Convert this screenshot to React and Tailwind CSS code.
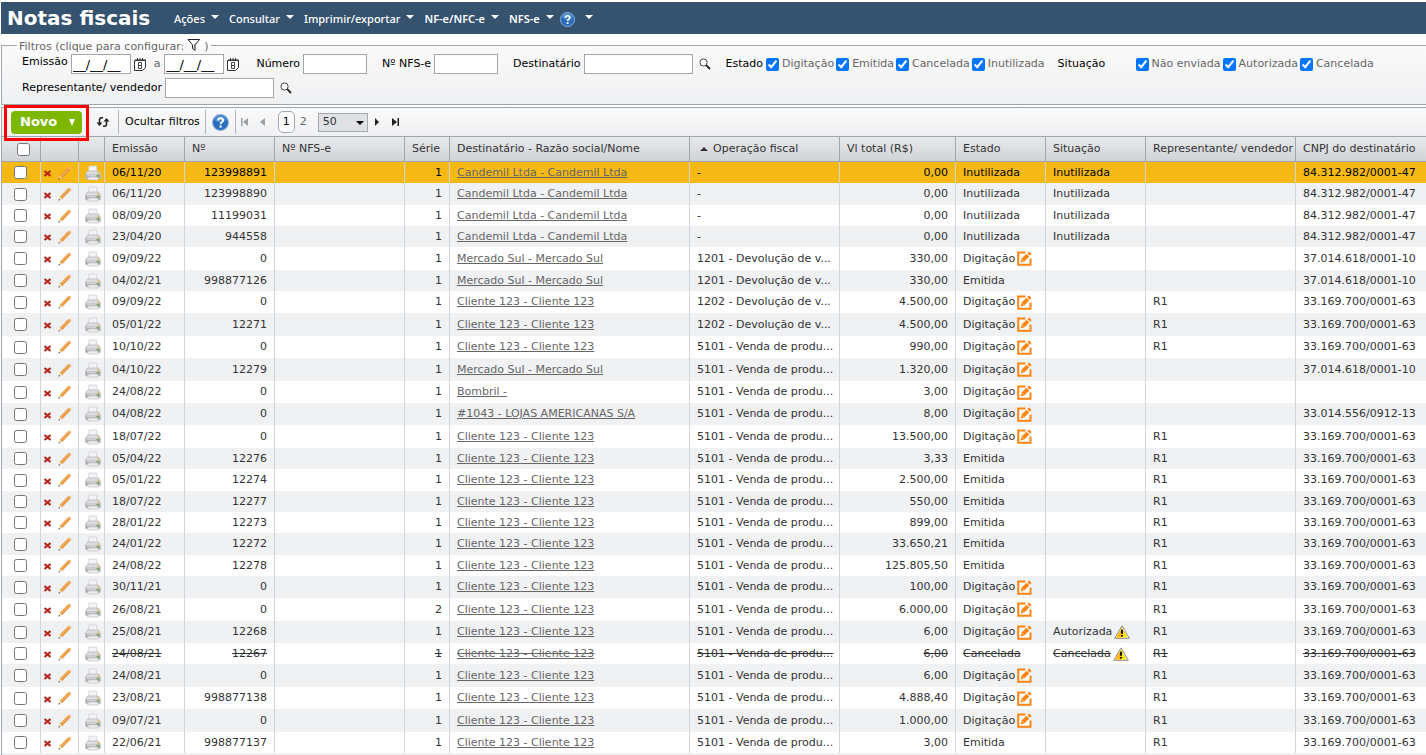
import React, { useState } from 'react';

const filtersEstado = ['Digitação', 'Emitida', 'Cancelada', 'Inutilizada'];
const filtersSituacao = ['Não enviada', 'Autorizada', 'Cancelada'];

const CNPJ_CANDEMIL = '84.312.982/0001-47';
const CNPJ_MERCADO = '37.014.618/0001-10';
const CNPJ_CLIENTE = '33.169.700/0001-63';
const CANDEMIL = 'Candemil Ltda - Candemil Ltda';
const MERCADO = 'Mercado Sul - Mercado Sul';
const CLIENTE = 'Cliente 123 - Cliente 123';
const DEV1 = '1201 - Devolução de v...';
const DEV2 = '1202 - Devolução de v...';
const VENDA = '5101 - Venda de produ...';

// altura, emissão, nº, série, destinatário, operação, total, estado, situação, representante, cnpj
const notas = [
    ['h-[21px]', '06/11/20', '123998891', 1, CANDEMIL, '-', '0,00', 'Inutilizada', 'Inutilizada', '', CNPJ_CANDEMIL],
    ['h-[22px]', '06/11/20', '123998890', 1, CANDEMIL, '-', '0,00', 'Inutilizada', 'Inutilizada', '', CNPJ_CANDEMIL],
    ['h-[21px]', '08/09/20', '11199031', 1, CANDEMIL, '-', '0,00', 'Inutilizada', 'Inutilizada', '', CNPJ_CANDEMIL],
    ['h-[21px]', '23/04/20', '944558', 1, CANDEMIL, '-', '0,00', 'Inutilizada', 'Inutilizada', '', CNPJ_CANDEMIL],
    ['h-[23px]', '09/09/22', '0', 1, MERCADO, DEV1, '330,00', 'Digitação', '', '', CNPJ_MERCADO],
    ['h-[21px]', '04/02/21', '998877126', 1, MERCADO, DEV1, '330,00', 'Emitida', '', '', CNPJ_MERCADO],
    ['h-[22px]', '09/09/22', '0', 1, CLIENTE, DEV2, '4.500,00', 'Digitação', '', 'R1', CNPJ_CLIENTE],
    ['h-[23px]', '05/01/22', '12271', 1, CLIENTE, DEV2, '4.500,00', 'Digitação', '', 'R1', CNPJ_CLIENTE],
    ['h-[22px]', '10/10/22', '0', 1, CLIENTE, VENDA, '990,00', 'Digitação', '', 'R1', CNPJ_CLIENTE],
    ['h-[23px]', '04/10/22', '12279', 1, MERCADO, VENDA, '1.320,00', 'Digitação', '', '', CNPJ_MERCADO],
    ['h-[22px]', '24/08/22', '0', 1, 'Bombril -', VENDA, '3,00', 'Digitação', '', '', ''],
    ['h-[22px]', '04/08/22', '0', 1, '#1043 - LOJAS AMERICANAS S/A', VENDA, '8,00', 'Digitação', '', '', '33.014.556/0912-13'],
    ['h-[23px]', '18/07/22', '0', 1, CLIENTE, VENDA, '13.500,00', 'Digitação', '', 'R1', CNPJ_CLIENTE],
    ['h-[21px]', '05/04/22', '12276', 1, CLIENTE, VENDA, '3,33', 'Emitida', '', 'R1', CNPJ_CLIENTE],
    ['h-[22px]', '05/01/22', '12274', 1, CLIENTE, VENDA, '2.500,00', 'Emitida', '', 'R1', CNPJ_CLIENTE],
    ['h-[21px]', '18/07/22', '12277', 1, CLIENTE, VENDA, '550,00', 'Emitida', '', 'R1', CNPJ_CLIENTE],
    ['h-[21px]', '28/01/22', '12273', 1, CLIENTE, VENDA, '899,00', 'Emitida', '', 'R1', CNPJ_CLIENTE],
    ['h-[22px]', '24/01/22', '12272', 1, CLIENTE, VENDA, '33.650,21', 'Emitida', '', 'R1', CNPJ_CLIENTE],
    ['h-[21px]', '24/08/22', '12278', 1, CLIENTE, VENDA, '125.805,50', 'Emitida', '', 'R1', CNPJ_CLIENTE],
    ['h-[22px]', '30/11/21', '0', 1, CLIENTE, VENDA, '100,00', 'Digitação', '', 'R1', CNPJ_CLIENTE],
    ['h-[23px]', '26/08/21', '0', 2, CLIENTE, VENDA, '6.000,00', 'Digitação', '', 'R1', CNPJ_CLIENTE],
    ['h-[22px]', '25/08/21', '12268', 1, CLIENTE, VENDA, '6,00', 'Digitação', 'Autorizada', 'R1', CNPJ_CLIENTE],
    ['h-[21px]', '24/08/21', '12267', 1, CLIENTE, VENDA, '6,00', 'Cancelada', 'Cancelada', 'R1', CNPJ_CLIENTE],
    ['h-[23px]', '24/08/21', '0', 1, CLIENTE, VENDA, '6,00', 'Digitação', '', 'R1', CNPJ_CLIENTE],
    ['h-[22px]', '23/08/21', '998877138', 1, CLIENTE, VENDA, '4.888,40', 'Digitação', '', 'R1', CNPJ_CLIENTE],
    ['h-[23px]', '09/07/21', '0', 1, CLIENTE, VENDA, '1.000,00', 'Digitação', '', 'R1', CNPJ_CLIENTE],
    ['h-[21px]', '22/06/21', '998877137', 1, CLIENTE, VENDA, '3,00', 'Emitida', '', 'R1', CNPJ_CLIENTE],
];

function Caret({ className }) {
    return (
        <svg viewBox="0 0 8 4" className={`h-1 w-2 ${className}`} fill="currentColor">
            <path d="M0 0h8L4 4z" />
        </svg>
    );
}

function HelpIcon({ className }) {
    return (
        <svg viewBox="0 0 16 16" className={className}>
            <circle cx="8" cy="8" r="7.5" fill="#2b6cb8" stroke="#8fb3dc" />
            <ellipse cx="8" cy="4.6" rx="5.4" ry="3.6" fill="#5c9ade" opacity=".7" />
            <path d="M5.7 6.2c0-3 4.7-2.9 4.7 0 0 1.7-2.3 1.6-2.3 3.4" fill="none" stroke="#fff" strokeWidth="1.8" />
            <rect x="7.1" y="10.8" width="2" height="2" fill="#fff" />
        </svg>
    );
}

function SearchIcon() {
    return (
        <svg viewBox="0 0 12 12" className="h-3 w-3" fill="none">
            <circle cx="4.5" cy="4.5" r="3.6" fill="#fff" stroke="#444" />
            <path d="M7.2 7.2l3.8 3.8" stroke="#222" strokeWidth="1.8" />
        </svg>
    );
}

function CalendarIcon() {
    return (
        <svg viewBox="0 0 13 13" className="h-[13px] w-[13px]" fill="none" stroke="#333">
            <path d="M.5 2.5h11v7l-3 3h-8z" fill="#fff" />
            <path d="M1 2h11M3.5 0v2M6 0v2M8.5 0v2" />
            <path d="M4.5 4.5h3v6h-3zM4.5 7.5h3" strokeWidth=".9" />
            <path d="M8.5 12.500l3-3" />
        </svg>
    );
}

function FunnelIcon() {
    return (
        <svg viewBox="0 0 14 14" className="h-[14px] w-[14px]">
            <path d="M1 1.500h11.500L8 7v5.500L5.500 10.500V7z" fill="#fff" stroke="#222" />
            <path d="M6.800 7v4L8 12.500V7l3-4z" fill="#777" />
        </svg>
    );
}

function RefreshIcon() {
    return (
        <svg viewBox="0 0 14 12" className="h-3 w-[14px]" fill="none" stroke="#222" strokeWidth="1.5">
            <path d="M7 1.700H5.500Q3.500 1.700 3.500 4v4M7 10.300h1.500q2 0 2-2.300V4" />
            <path d="M.5 6.500h6l-3 3.500zM7.500 5.500h6L10.500 2z" fill="#222" stroke="none" />
        </svg>
    );
}

function DeleteIcon() {
    return (
        <svg viewBox="0 0 7 7" className="h-[7px] w-[7px]" fill="none" stroke="#b8281f" strokeWidth="2.2">
            <path d="M.5 1l6 5M6.500 1l-6 5" />
        </svg>
    );
}

function PencilIcon() {
    return (
        <svg viewBox="0 0 14 14" className="h-[14px] w-[14px]">
            <path d="M1.800 10L10 1.600q1-.9 2 0t.2 2L4 12z" fill="#ec9a3d" stroke="#d98a3a" strokeWidth=".4" />
            <path d="M2.600 10.600L11 2.200" stroke="#f8c789" strokeWidth=".6" />
            <path d="M1.800 10L4 12l-3.300 1.300z" fill="#f5dcb5" />
            <path d="M1.200 11.900l1 1-1.900.7z" fill="#333" />
            <path d="M10 1.600q1.500-1.600 2.700-.4t-.5 2.400z" fill="#f3b878" />
        </svg>
    );
}

function PrinterIcon() {
    return (
        <svg viewBox="0 0 16 16" className="h-4 w-4">
            <path d="M4 1h7.500l.5 6H3.500z" fill="#f3f3f5" stroke="#cfd0d4" strokeWidth=".8" />
            <path d="M2.500 6h11l2 3v4.500h-15V9z" fill="#dcdddf" stroke="#b5b6ba" strokeWidth=".7" />
            <path d="M1 9.500h14V13H1z" fill="#a9abb0" />
            <path d="M2 9.500h9v2H2z" fill="#cfd0d2" />
            <path d="M3.500 12h9l1 3h-11z" fill="#eee" stroke="#bbb" strokeWidth=".6" />
            <rect x="12.5" y="7.5" width="1.5" height="1.5" fill="#e6b422" />
            <rect x="12.5" y="10" width="1.5" height="1.5" fill="#65b02c" />
        </svg>
    );
}

function EditIcon() {
    return (
        <svg viewBox="0 0 15 15" className="h-[15px] w-[15px]">
            <path d="M1 1h12.500v12.800H1z" fill="#fff" />
            <path d="M8.500 1.500H1.200v12.300h12.300V7.500" fill="none" stroke="#ff8412" strokeWidth="2" />
            <path d="M3.600 11.400l.8-3.600L9.500 2.700l2.800 2.800-5.100 5.100z" fill="#ff8412" />
            <path d="M10.300 2l1-1q.7-.6 1.400 0l1.300 1.300q.6.7 0 1.400l-1 1z" fill="#ff8412" />
            <path d="M5.200 8.500l1.300 1.300" stroke="#fff" strokeWidth=".8" />
        </svg>
    );
}

function WarningIcon() {
    return (
        <svg viewBox="0 0 16 14" className="h-[14px] w-4">
            <path d="M8 .9L15.300 13.300H.7z" fill="#fff" stroke="#85878c" strokeLinejoin="round" />
            <path d="M8 2.500L13.800 12.400H2.200z" fill="#ffe500" />
            <path d="M8 2.500v9.900H2.200z" fill="#ffb800" />
            <path d="M8 4.800v4M8 10v1.600" stroke="#111" strokeWidth="2" />
        </svg>
    );
}

function PageArrow({ label, d, disabled }) {
    return (
        <button type="button" aria-label={label} disabled={disabled} className={disabled ? 'text-[#9b9fa6]' : 'text-[#222]'}>
            <svg viewBox="0 0 8 8" className="h-2 w-2" fill="currentColor">
                <path d={d} />
            </svg>
        </button>
    );
}

function MenuItem({ label, bold }) {
    return (
        <button type="button" className={`flex items-center gap-[6px] ${bold ? 'font-semibold' : 'font-medium'}`}>
            {label}
            <Caret className="mb-1" />
        </button>
    );
}

function TextFilter({ id, label, width, search }) {
    return (
        <div className="flex items-center gap-[3px]">
            <label htmlFor={id} className="whitespace-nowrap">{label}</label>
            <input id={id} type="text" className={`h-5 border border-[#a5a5a5] bg-white px-1 ${width}`} />
            {search && (
                <button type="button" aria-label={`Pesquisar ${label}`} className="ml-[3px]">
                    <SearchIcon />
                </button>
            )}
        </div>
    );
}

function CheckFilter({ label }) {
    return (
        <label className="flex items-center gap-[3px] whitespace-nowrap text-[#666]">
            <input type="checkbox" defaultChecked className="h-[13px] w-[13px] accent-[#0075ff]" />
            {label}
        </label>
    );
}

function DateInput({ id, label }) {
    return (
        <>
            <input
                id={id}
                type="text"
                aria-label={label}
                defaultValue="__/__/__"
                className="h-5 w-[60px] border border-[#a5a5a5] bg-white px-px text-[13px] text-black"
            />
            <button type="button" aria-label="Abrir calendário" className="ml-[3px]">
                <CalendarIcon />
            </button>
        </>
    );
}

function Filters() {
    return (
        <fieldset className="ml-px h-[67px] border border-r-0 border-[#9fa6ae] bg-linear-to-b from-[#fafafa] to-[#eff0f2] text-black">
            <legend className="ml-[15px] flex h-[14px] items-end px-[2px] leading-[11px] text-[#666]">
                Filtros (clique para configurar:
                <button type="button" aria-label="Configurar filtros" className="mx-[3px]">
                    <FunnelIcon />
                </button>
                )
            </legend>
            <div className="mt-[2px] flex h-5 items-center pl-5">
                <label htmlFor="emissao-de" className="mr-[3px] mb-1">Emissão</label>
                <DateInput id="emissao-de" label="Emissão de" />
                <span className="mr-1 ml-[7px] text-[#666]">a</span>
                <DateInput id="emissao-ate" label="Emissão até" />
                <div className="ml-4 flex items-center gap-[15px]">
                    <TextFilter id="numero" label="Número" width="w-16" />
                    <TextFilter id="nfse" label="Nº NFS-e" width="w-16" />
                    <TextFilter id="destinatario" label="Destinatário" width="w-[109px]" search />
                </div>
                <span className="mr-[3px] ml-[15px]">Estado</span>
                <div className="flex gap-[2px]">
                    {filtersEstado.map((f) => <CheckFilter key={f} label={f} />)}
                </div>
                <span className="ml-[13px] w-[78px]">Situação</span>
                <div className="flex gap-[2px]">
                    {filtersSituacao.map((f) => <CheckFilter key={f} label={f} />)}
                </div>
            </div>
            <div className="mt-1 flex h-5 items-center pl-5">
                <TextFilter id="representante" label="Representante/ vendedor" width="w-[109px]" search />
            </div>
        </fieldset>
    );
}

function Toolbar() {
    return (
        <div className="ml-px mt-[2px] flex h-[29px] items-center border-t border-l border-[#9fa6ae] bg-linear-to-b from-[#fafafa] to-[#eff0f2] text-black">
            <div className="relative ml-[9px] flex">
                <div className="pointer-events-none absolute -inset-x-[7px] -top-[6px] -bottom-[7px] z-10 border-3 border-[#fe0000]" />
                <button type="button" className="flex h-[23px] w-[71px] items-center justify-between rounded-sm bg-[#7db700] pr-[6px] pl-[9px] text-[13px] font-bold text-white">
                    Novo
                    <svg viewBox="0 0 8 8" className="h-2 w-2" fill="currentColor">
                        <path d="M1 1h6L4 8z" />
                    </svg>
                </button>
            </div>
            <button type="button" aria-label="Atualizar" className="ml-[14px]">
                <RefreshIcon />
            </button>
            <div className="ml-2 flex h-6 items-center border-x border-[#b0b5bb] pr-[5px] pl-[6px]">
                <button type="button">Ocultar filtros</button>
            </div>
            <div className="flex h-6 items-center border-r border-[#b0b5bb] px-[6px]">
                <button type="button" aria-label="Ajuda">
                    <HelpIcon className="h-[17px] w-[17px]" />
                </button>
            </div>
            <div className="ml-[5px] flex items-center gap-[10px]">
                <PageArrow label="Primeira página" disabled d="M0 0h1.500v8H0zM7 0v8L2 4z" />
                <PageArrow label="Página anterior" disabled d="M6 0v8L1 4z" />
            </div>
            <span className="ml-[11px] flex h-[22px] w-[17px] items-center justify-center rounded-[5px] border border-[#9fa6ae] bg-white">1</span>
            <a href="#pagina-2" className="ml-[5px] text-[#666]">2</a>
            <div className="relative ml-[11px]">
                <select aria-label="Itens por página" defaultValue="50" className="block h-[19px] w-[50px] appearance-none border border-[#a3a8ae] bg-[#dfe1e4] pl-1 text-[#333]">
                    <option>50</option>
                    <option>100</option>
                </select>
                <Caret className="pointer-events-none absolute top-2 right-1" />
            </div>
            <div className="ml-[6px] flex items-center gap-[10px]">
                <PageArrow label="Próxima página" d="M1 0v8l4-4z" />
                <PageArrow label="Última página" d="M0 0v8l5-4zM5.500 0H7v8H5.500z" />
            </div>
        </div>
    );
}

function Th({ children, className = '' }) {
    return (
        <th className={`overflow-hidden border-r border-[#9fa6ae] px-[7px] text-left font-normal whitespace-nowrap last:border-r-0 ${className}`}>
            {children}
        </th>
    );
}

function Td({ children, className = '' }) {
    return (
        <td className={`overflow-hidden border-r border-[#d2d5da] px-[7px] py-0 whitespace-nowrap last:border-r-0 ${className}`}>
            {children}
        </td>
    );
}

function NotaRow({ nota, selected, onSelect }) {
    const [height, emissao, numero, serie, destinatario, operacao, total, estado, situacao, representante, cnpj] = nota;
    const cancelada = estado === 'Cancelada';
    const color = selected ? 'bg-[#f5b915] text-black' : 'odd:bg-white even:bg-[#f0f1f3]';

    return (
        <tr onClick={onSelect} className={`leading-[14px] ${height} ${color} ${cancelada ? 'line-through' : ''}`}>
            <td className="border-r border-l border-r-[#d2d5da] border-l-[#9fa6ae] p-0">
                <input type="checkbox" aria-label={`Selecionar nota ${numero}`} className="ml-3 block h-[13px] w-[13px]" />
            </td>
            <Td>
                <div className="-mx-[4px] flex items-center gap-[7px]">
                    <button type="button" aria-label="Excluir" className="pt-[2px]"><DeleteIcon /></button>
                    <button type="button" aria-label="Editar"><PencilIcon /></button>
                </div>
            </Td>
            <Td>
                <button type="button" aria-label="Imprimir" className="-mx-[1px] block"><PrinterIcon /></button>
            </Td>
            <Td>{emissao}</Td>
            <Td className="text-right">{numero}</Td>
            <Td />
            <Td className="text-right">{serie}</Td>
            <Td><a href="#destinatario" className={`text-[#666] ${cancelada ? '[text-decoration:underline_line-through]' : 'underline'}`}>{destinatario}</a></Td>
            <Td>{operacao}</Td>
            <Td className="text-right">{total}</Td>
            <Td>
                <div className="flex items-center gap-[2px]">
                    {estado}
                    {estado === 'Digitação' && <button type="button" aria-label="Editar digitação"><EditIcon /></button>}
                </div>
            </Td>
            <Td>
                <div className="flex items-center gap-[2px]">
                    {situacao}
                    {situacao && situacao !== 'Inutilizada' && <WarningIcon />}
                </div>
            </Td>
            <Td>{representante}</Td>
            <Td>{cnpj}</Td>
        </tr>
    );
}

export default function App() {
    const [selected, setSelected] = useState(0);

    return (
        <div className="h-screen overflow-hidden bg-white font-['Verdana','DejaVu_Sans',sans-serif] text-[11px] leading-[14px] text-[#333]">
            {/* Header */}
            <header className="mt-[2px] ml-px flex h-8 items-center bg-[#35526f] pl-[6px] text-white">
                <h1 className="w-[167px] text-[20px] leading-6 font-bold whitespace-nowrap">Notas fiscais</h1>
                <nav className="flex items-center gap-[10px] pt-[2px] font-['Noto_Sans',sans-serif]">
                    <MenuItem label="Ações" />
                    <MenuItem label="Consultar" />
                    <MenuItem label="Imprimir/exportar" />
                    <MenuItem label="NF-e/NFC-e" bold />
                    <MenuItem label="NFS-e" bold />
                    <button type="button" aria-label="Ajuda" className="-ml-1 flex items-center gap-[10px]">
                        <HelpIcon className="h-[15px] w-[15px]" />
                        <Caret className="mb-1" />
                    </button>
                </nav>
            </header>

            <div className="mt-1">
                <Filters />
            </div>
            <Toolbar />

            {/* Tabela de notas */}
            <div className="ml-px">
                <table className="w-full table-fixed border-separate border-spacing-0">
                    <colgroup>
                        <col className="w-10" />
                        <col className="w-[38px]" />
                        <col className="w-[26px]" />
                        <col className="w-20" />
                        <col className="w-[90px]" />
                        <col className="w-[130px]" />
                        <col className="w-[45px]" />
                        <col className="w-60" />
                        <col className="w-[150px]" />
                        <col className="w-[116px]" />
                        <col className="w-[90px]" />
                        <col className="w-[100px]" />
                        <col className="w-[150px]" />
                        <col />
                    </colgroup>
                    <thead>
                        <tr className="h-[26px] bg-linear-to-b from-[#e9eaec] to-[#cfd2d6] *:border-y *:border-[#9fa6ae]">
                            <th className="border-x border-[#9fa6ae] p-0">
                                <input type="checkbox" aria-label="Selecionar todas" className="ml-[15px] block h-[13px] w-[13px]" />
                            </th>
                            <Th />
                            <Th />
                            <Th>Emissão</Th>
                            <Th>Nº</Th>
                            <Th>Nº NFS-e</Th>
                            <Th>Série</Th>
                            <Th>Destinatário - Razão social/Nome</Th>
                            <Th>
                                <span className="flex items-center gap-[5px] pl-[3px]">
                                    <Caret className="rotate-180" />
                                    Operação fiscal
                                </span>
                            </Th>
                            <Th>Vl total (R$)</Th>
                            <Th>Estado</Th>
                            <Th>Situação</Th>
                            <Th>Representante/ vendedor</Th>
                            <Th>CNPJ do destinatário</Th>
                        </tr>
                    </thead>
                    <tbody>
                        {notas.map((nota, i) => (
                            <NotaRow key={i} nota={nota} selected={i === selected} onSelect={() => setSelected(i)} />
                        ))}
                        <tr className="h-[22px] bg-[#f0f1f3]">
                            <td colSpan={14} className="border-l border-[#9fa6ae]" />
                        </tr>
                    </tbody>
                </table>
            </div>
        </div>
    );
}
